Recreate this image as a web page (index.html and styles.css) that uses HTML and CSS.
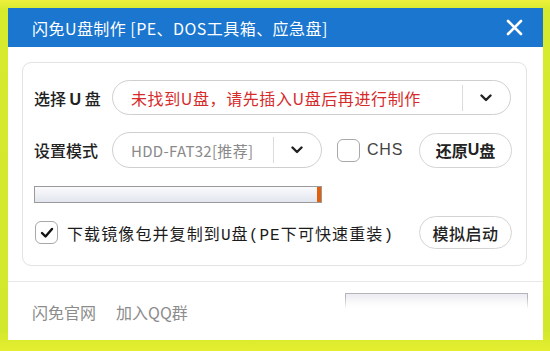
FILE: index.html
```html
<!DOCTYPE html>
<html lang="zh-CN">
<head>
<meta charset="utf-8">
<title>闪免U盘制作</title>
<link rel="stylesheet" href="styles.css">
</head>
<body>
<div class="window">
  <div class="titlebar">
    <span class="title">闪免U盘制作 [PE、DOS工具箱、应急盘]</span>
    <svg class="close" width="17" height="17" viewBox="0 0 17 17"><path d="M2 2 L15 15 M15 2 L2 15" stroke="#fff" stroke-width="2.6" stroke-linecap="round"/></svg>
  </div>
  <div class="main">
    <div class="card">
      <div class="row row1">
        <span class="label">选择 <b>U</b> 盘</span>
        <div class="combo combo-wide">
          <span class="combo-text red">未找到U盘，请先插入U盘后再进行制作</span>
          <span class="sep"></span>
          <svg class="chev" width="12" height="8" viewBox="0 0 12 8"><path d="M1.5 1.5 L6 6 L10.5 1.5" fill="none" stroke="#222" stroke-width="2.4" stroke-linecap="round" stroke-linejoin="round"/></svg>
        </div>
      </div>
      <div class="row row2">
        <span class="label">设置模式</span>
        <div class="combo combo-narrow">
          <span class="combo-text gray">HDD-FAT32[推荐]</span>
          <span class="sep"></span>
          <svg class="chev" width="12" height="8" viewBox="0 0 12 8"><path d="M1.5 1.5 L6 6 L10.5 1.5" fill="none" stroke="#222" stroke-width="2.4" stroke-linecap="round" stroke-linejoin="round"/></svg>
        </div>
        <span class="check"></span>
        <span class="chs">CHS</span>
        <span class="btn">还原<b>U</b>盘</span>
      </div>
      <div class="row row3">
        <div class="progress"><span class="progress-end"></span></div>
      </div>
      <div class="row row4">
        <span class="check checked"><svg width="14" height="12" viewBox="0 0 14 12"><path d="M2 6 L5.5 9.5 L12 2" fill="none" stroke="#111" stroke-width="2.4" stroke-linecap="round" stroke-linejoin="round"/></svg></span>
        <span class="dl">下载镜像包并复制到U盘(PE下可快速重装)</span>
        <span class="btn btn-sm">模拟启动</span>
      </div>
    </div>
  </div>
  <div class="footer">
    <span class="link">闪免官网</span>
    <span class="link">加入QQ群</span>
    <div class="ghost"></div>
  </div>
</div>
</body>
</html>
```

FILE: styles.css
```css
html, body {
  margin: 0;
  padding: 0;
}
body {
  width: 550px;
  height: 351px;
  overflow: hidden;
  background: linear-gradient(180deg, #eef03a 0px, #d6ea2e 10px, #d2e82c 330px, #e6ee30 351px);
  font-family: "Noto Sans CJK SC", "Noto Sans", sans-serif;
}
.window {
  margin: 8px 0 0 8px;
  width: 535px;
  height: 332px;
  background: #fff;
  display: flex;
  flex-direction: column;
}
.titlebar {
  height: 39px;
  background: #1a76cf;
  display: flex;
  align-items: center;
  justify-content: space-between;
  padding: 0 20px 0 24px;
  flex-shrink: 0;
}
.title {
  color: #fff;
  font-size: 16px;
  letter-spacing: 0.45px;
}
.close {
  display: block;
}
.main {
  padding: 15px 16px 15px 14px;
  border-bottom: 1px solid #e8e8e8;
}
.card {
  height: 204px;
  box-sizing: border-box;
  border: 1px solid #e2e2e2;
  border-radius: 9px;
  padding: 17px 14px 0 11px;
  display: flex;
  flex-direction: column;
}
.row {
  display: flex;
  align-items: center;
}
.row1 { height: 35px; }
.row2 { height: 36px; margin-top: 17px; }
.row3 { height: 17px; margin-top: 18px; }
.row4 { height: 33px; margin-top: 13px; }
.label {
  width: 78px;
  flex-shrink: 0;
  font-size: 16px;
  color: #222;
  font-weight: 500;
  white-space: nowrap;
}
.label b {
  font-family: "Liberation Sans", sans-serif;
  font-weight: 700;
}
.combo {
  box-sizing: border-box;
  height: 100%;
  border: 1px solid #cfcfcf;
  border-radius: 18px;
  display: flex;
  align-items: center;
  padding-left: 18px;
}
.combo-wide { width: 399px; }
.combo-narrow { width: 210px; }
.combo-text {
  font-size: 16px;
  white-space: nowrap;
  flex: 1;
}
.red {
  color: #d62b2b;
  letter-spacing: 0.6px;
}
.gray {
  color: #8a8a8a;
  font-size: 15px;
  letter-spacing: 0.3px;
}
.sep {
  width: 1px;
  height: 26px;
  background: #dcdcdc;
  margin-right: 17px;
}
.chev {
  display: block;
  margin-right: 18px;
}
.check {
  box-sizing: border-box;
  width: 23px;
  height: 23px;
  border: 1px solid #a8a8a8;
  border-radius: 6px;
  flex-shrink: 0;
  display: flex;
  align-items: center;
  justify-content: center;
}
.row2 .check {
  margin-left: 15px;
}
.chs {
  margin-left: 7px;
  font-family: "Liberation Sans", sans-serif;
  font-size: 16px;
  color: #444;
  letter-spacing: 0.8px;
}
.btn {
  margin-left: auto;
  box-sizing: border-box;
  width: 93px;
  height: 35px;
  border: 1px solid #d4d4d4;
  border-radius: 18px;
  display: flex;
  align-items: center;
  justify-content: center;
  font-size: 16px;
  font-weight: 700;
  color: #222;
}
.btn b {
  font-family: "Liberation Sans", sans-serif;
}
.btn-sm {
  height: 33px;
  font-weight: 500;
  letter-spacing: 0.5px;
}
.progress {
  box-sizing: border-box;
  width: 288px;
  height: 17px;
  border: 1px solid #9a9a9a;
  background: linear-gradient(180deg, #fbfbfd 0%, #eceef4 60%, #e2e5ee 100%);
  display: flex;
  justify-content: flex-end;
}
.progress-end {
  width: 4px;
  background: #e0600e;
}
.row4 .check {
  margin-left: 1px;
}
.dl {
  margin-left: 9px;
  font-family: "Liberation Mono", "Noto Sans CJK SC", monospace;
  font-size: 16px;
  color: #1c1c1c;
  letter-spacing: 1.1px;
  white-space: nowrap;
}
.footer {
  flex: 1;
  display: flex;
  align-items: flex-start;
  padding: 20px 0 0 24px;
  position: relative;
}
.link {
  font-size: 16px;
  color: #8c8c8c;
  margin-right: 20px;
  line-height: 20px;
}
.ghost {
  position: absolute;
  left: 337px;
  top: 11px;
  width: 183px;
  height: 16px;
  box-sizing: border-box;
  border: 1px solid #b4b4bc;
  border-bottom: none;
  background: linear-gradient(180deg, #ececf2 0%, #fdfdfd 100%);
  -webkit-mask-image: linear-gradient(180deg, #000 0%, #000 25%, transparent 100%);
  mask-image: linear-gradient(180deg, #000 0%, #000 25%, transparent 100%);
}
```
